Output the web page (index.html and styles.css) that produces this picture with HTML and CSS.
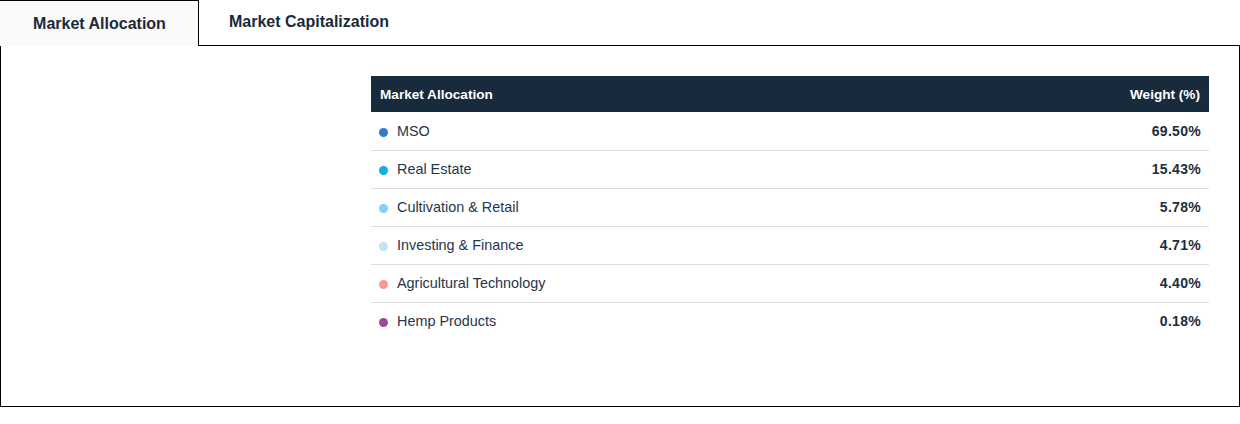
FILE: index.html
```html
<!DOCTYPE html>
<html>
<head>
<meta charset="utf-8">
<link rel="stylesheet" href="styles.css">
</head>
<body>
<div class="tabs">
  <div class="tab active">Market Allocation</div>
  <div class="tab">Market Capitalization</div>
</div>
<div class="panel">
  <div class="chart"></div>
  <table class="alloc">
    <thead>
      <tr><th class="name">Market Allocation</th><th class="weight">Weight (%)</th></tr>
    </thead>
    <tbody>
      <tr><td class="name"><span class="dot c1"></span>MSO</td><td class="weight">69.50%</td></tr>
      <tr><td class="name"><span class="dot c2"></span>Real Estate</td><td class="weight">15.43%</td></tr>
      <tr><td class="name"><span class="dot c3"></span>Cultivation &amp; Retail</td><td class="weight">5.78%</td></tr>
      <tr><td class="name"><span class="dot c4"></span>Investing &amp; Finance</td><td class="weight">4.71%</td></tr>
      <tr><td class="name"><span class="dot c5"></span>Agricultural Technology</td><td class="weight">4.40%</td></tr>
      <tr><td class="name"><span class="dot c6"></span>Hemp Products</td><td class="weight">0.18%</td></tr>
    </tbody>
  </table>
</div>
</body>
</html>
```
FILE: styles.css
```css
* { box-sizing: border-box; }
body {
  margin: 0;
  background: #fff;
  font-family: "Liberation Sans", Arial, sans-serif;
  color: #1d2d3d;
  width: 1240px;
}
.tabs {
  display: flex;
  height: 45px;
  position: relative;
  z-index: 1;
}
.tab {
  height: 45px;
  font-size: 16px;
  font-weight: bold;
  color: #1a2a3a;
  display: flex;
  align-items: center;
  justify-content: center;
}
.tab.active {
  width: 199px;
  background: #fafafa;
  border-top: 1px solid #000;
  border-right: 1px solid #000;
  height: 46px;
  padding: 0 0 0 1px;
}
.tab:not(.active) {
  padding: 0 0 1px 30px;
}
.panel {
  border: 1px solid #000;
  height: 362px;
  display: grid;
  grid-template-columns: 339px 1fr;
  padding: 30px 30px 0 31px;
  align-items: start;
}
.alloc {
  border-collapse: collapse;
  width: 838px;
  font-size: 14.4px;
}
.alloc th {
  background: #172b3d;
  color: #fff;
  font-size: 13.6px;
  font-weight: bold;
  height: 36px;
  padding: 0 9px;
  text-align: left;
}
.alloc th.weight, .alloc td.weight { text-align: right; }
.alloc td {
  height: 38px;
  padding: 0 8px 0 8px;
  border-bottom: 1px solid #dddddd;
  color: #26364a;
}
.alloc tr:last-child td { border-bottom: none; }
.alloc td.weight { font-weight: bold; letter-spacing: 0.3px; color: #1d2d3d; font-size: 14px; }
.dot {
  display: inline-block;
  width: 9px;
  height: 9px;
  border-radius: 50%;
  margin-right: 9px;
  vertical-align: -1px;
}
.c1 { background: #347ac6; }
.c2 { background: #0eaeea; }
.c3 { background: #7fd1f5; }
.c4 { background: #bfe5f1; }
.c5 { background: #fa9890; }
.c6 { background: #9a4b9b; }
```
